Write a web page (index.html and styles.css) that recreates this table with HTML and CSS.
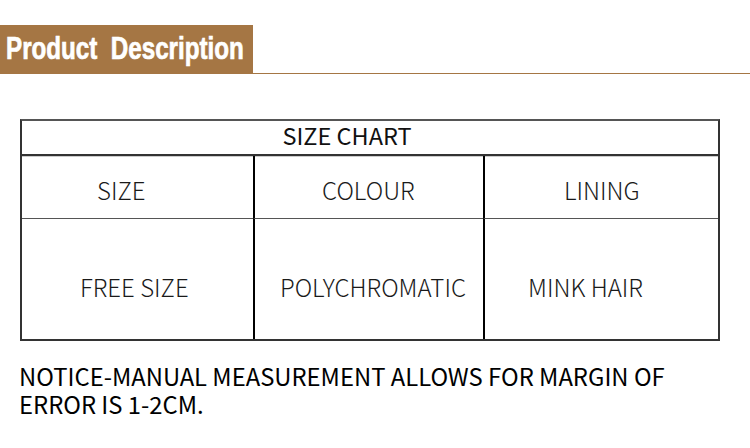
FILE: index.html
```html
<!DOCTYPE html>
<html>
<head>
<meta charset="utf-8">
<link rel="stylesheet" href="styles.css">
</head>
<body>
<header class="banner">
  <h1 class="tag"><span class="tag-text">Product&nbsp; Description</span></h1>
  <div class="rule"></div>
</header>
<section class="chart">
  <div class="chart-title">SIZE CHART</div>
  <div class="chart-grid">
    <div class="cell head c1">SIZE</div>
    <div class="cell head c2">COLOUR</div>
    <div class="cell head c3">LINING</div>
    <div class="cell body c1">FREE SIZE</div>
    <div class="cell body c2">POLYCHROMATIC</div>
    <div class="cell body c3">MINK HAIR</div>
  </div>
</section>
<p class="notice">NOTICE-MANUAL MEASUREMENT ALLOWS FOR MARGIN OF<br>ERROR IS 1-2CM.</p>
</body>
</html>
```
FILE: styles.css
```css
html, body {
  margin: 0;
  padding: 0;
  background: #fff;
}
body {
  width: 750px;
  height: 448px;
  overflow: hidden;
  font-family: "Noto Sans CJK SC", "Noto Sans", sans-serif;
  color: #111;
}
.banner {
  display: flex;
  align-items: flex-end;
  margin-top: 25px;
}
.tag {
  margin: 0;
  width: 253px;
  height: 49px;
  flex: none;
  box-sizing: border-box;
  background: #a57644;
  color: #fff;
  font-family: "Liberation Sans", Arial, sans-serif;
  font-weight: 700;
  font-size: 31px;
  line-height: 47px;
  padding-left: 6px;
  white-space: nowrap;
  overflow: hidden;
}
.tag-text {
  display: inline-block;
  transform: scaleX(0.78);
  transform-origin: left center;
  -webkit-text-stroke: 0.7px #fff;
}
.rule {
  flex: 1;
  border-bottom: 1px solid #a57644;
}
.chart {
  margin: 45px 0 0 20px;
  width: 700px;
  box-sizing: border-box;
  border: 2px solid #333;
  border-top-color: #555;
}
.chart-title {
  height: 33px;
  line-height: 29px;
  text-align: center;
  padding-right: 46px;
  font-size: 23.5px;
  font-weight: 400;
  border-bottom: 2px solid #333;
  box-shadow: 0 1px 0 #ccc;
}
.chart-grid {
  display: grid;
  grid-template-columns: 231px 230px 1fr;
  grid-template-rows: 63px 1fr;
  height: 183px;
}
.cell {
  display: flex;
  align-items: center;
  font-size: 24px;
  font-weight: 300;
  color: #1a1a1a;
  white-space: nowrap;
}
.head {
  border-bottom: 1px solid #555;
  padding-top: 5px;
}
.body {
  padding-top: 14px;
}
.c2, .c3 {
  border-left: 2px solid #000;
}
.head.c1 { padding-left: 75px; }
.head.c2 { padding-left: 67px; }
.head.c3 { padding-left: 79px; }
.body.c1 { padding-left: 58px; }
.body.c2 { padding-left: 25px; }
.body.c3 { padding-left: 43px; }
.notice {
  margin: 21px 0 0 19px;
  font-size: 23.8px;
  line-height: 28px;
  color: #000;
}
```
